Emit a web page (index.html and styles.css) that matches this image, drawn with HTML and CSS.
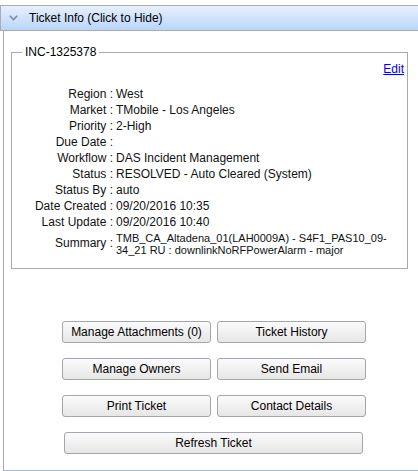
FILE: index.html
```html
<!DOCTYPE html>
<html>
<head>
<meta charset="utf-8">
<link rel="stylesheet" href="styles.css">
</head>
<body>
<div class="panel">
  <div class="header">
    <svg class="chev" width="9" height="6" viewBox="0 0 9 6"><polyline points="0.8,0.8 4.5,4.6 8.2,0.8" fill="none" stroke="#7d8c9c" stroke-width="1.6"/></svg>
    <span class="title">Ticket Info (Click to Hide)</span>
  </div>
  <div class="body">
    <fieldset class="box">
      <legend class="legend">INC-1325378</legend>
      <div class="edit-row"><a class="edit" href="#">Edit</a></div>
      <div class="grid">
        <div class="lbl">Region :</div><div class="val">West</div>
        <div class="lbl">Market :</div><div class="val">TMobile - Los Angeles</div>
        <div class="lbl">Priority :</div><div class="val">2-High</div>
        <div class="lbl">Due Date :</div><div class="val"></div>
        <div class="lbl">Workflow :</div><div class="val">DAS Incident Management</div>
        <div class="lbl">Status :</div><div class="val">RESOLVED - Auto Cleared (System)</div>
        <div class="lbl">Status By :</div><div class="val">auto</div>
        <div class="lbl">Date Created :</div><div class="val">09/20/2016 10:35</div>
        <div class="lbl">Last Update :</div><div class="val">09/20/2016 10:40</div>
        <div class="lbl sum">Summary :</div><div class="val sum">TMB_CA_Altadena_01(LAH0009A) - S4F1_PAS10_09-<br>34_21 RU : downlinkNoRFPowerAlarm - major</div>
      </div>
    </fieldset>
    <div class="buttons">
      <button class="btn">Manage Attachments (0)</button>
      <button class="btn">Ticket History</button>
      <button class="btn">Manage Owners</button>
      <button class="btn">Send Email</button>
      <button class="btn">Print Ticket</button>
      <button class="btn">Contact Details</button>
      <button class="btn wide">Refresh Ticket</button>
    </div>
  </div>
</div>
</body>
</html>
```
FILE: styles.css
```css
html, body {
  margin: 0;
  padding: 0;
  background: #fff;
  overflow: hidden;
}
body {
  font-family: "Liberation Sans", Arial, Helvetica, sans-serif;
  font-size: 12px;
  color: #000;
}
.panel {
  margin-top: 5px;
}
.header {
  height: 24px;
  border-top: 1px solid #a7adb7;
  border-bottom: 1px solid #a7adb7;
  border-left: 1px solid #a7adb7;
  background: linear-gradient(#e7f0fd, #b8d5fb);
  display: flex;
  align-items: center;
  padding-left: 8px;
}
.chev {
  display: block;
  margin-right: 11px;
}
.title {
  line-height: 14px;
}
.body {
  margin-left: 3px;
  border-left: 1px solid #aaaaaa;
  border-bottom: 1px solid #a6b9cd;
  padding: 14px 0 16px 7px;
}
.box {
  margin: 0;
  width: 397px;
  box-sizing: border-box;
  border: 1px solid #a9aab0;
  padding: 0 3px 12px 0;
}
.legend {
  margin-left: 10px;
  padding: 0 3px;
  line-height: 14px;
}
.edit-row {
  display: flex;
  justify-content: flex-end;
  margin-top: 3px;
  line-height: 14px;
}
.edit {
  color: #0000ee;
  text-decoration: underline;
}
.grid {
  margin-top: 10px;
  display: grid;
  grid-template-columns: 101px 1fr;
  column-gap: 3px;
  align-items: center;
}
.lbl {
  text-align: right;
  line-height: 16px;
  color: #111;
}
.val {
  line-height: 16px;
  min-height: 16px;
  color: #111;
}
.val.sum {
  font-size: 11px;
  line-height: 12px;
  margin-top: 2px;
  white-space: nowrap;
}
.buttons {
  margin: 52px 0 0 51px;
  display: grid;
  grid-template-columns: 149px 149px;
  column-gap: 6px;
  row-gap: 15px;
  width: 304px;
}
.btn {
  height: 22px;
  margin: 0;
  padding: 0;
  border: 1px solid #a3a6ad;
  border-radius: 3px;
  background: linear-gradient(#fbfbfb, #e6e6e6);
  font-family: "Liberation Sans", Arial, Helvetica, sans-serif;
  font-size: 12px;
  color: #000;
  text-align: center;
}
.btn.wide {
  grid-column: span 2;
  margin: 0 3px 0 2px;
}
```
